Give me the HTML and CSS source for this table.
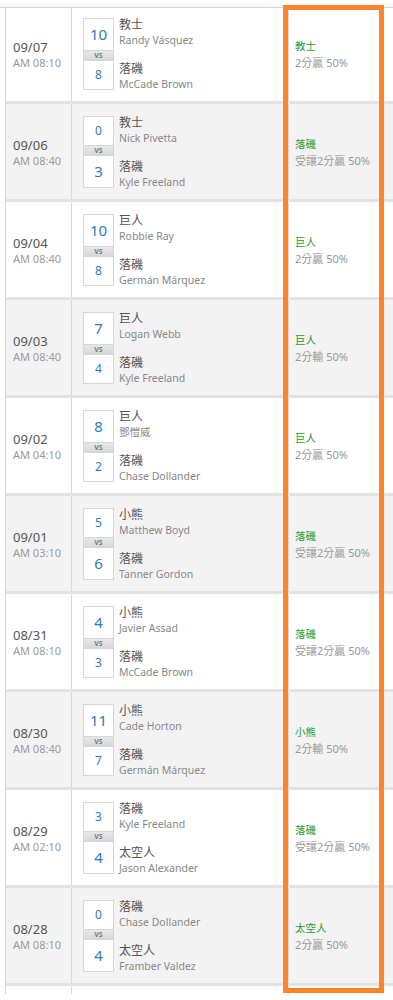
FILE: index.html
```html
<!DOCTYPE html>
<html lang="zh-Hant">
<head>
<meta charset="utf-8">
<title>賽果</title>
<link rel="stylesheet" href="styles.css">
</head>
<body>
<div class="page">
  <div class="topbar"></div>
  <div class="table">
    <div class="row">
      <div class="cell c-date"><div class="date">09/07</div><div class="time">AM 08:10</div></div>
      <div class="cell c-match">
        <div class="score"><div class="sc win">10</div><div class="vs">VS</div><div class="sc">8</div></div>
        <div class="teams">
          <div><div class="team">教士</div><div class="pitcher">Randy Vásquez</div></div>
          <div><div class="team">落磯</div><div class="pitcher">McCade Brown</div></div>
        </div>
      </div>
      <div class="cell c-res"><div class="pick">教士</div><div class="res">2分贏 50%</div></div>
      <div class="cell c-end"></div>
    </div>
    <div class="row alt">
      <div class="cell c-date"><div class="date">09/06</div><div class="time">AM 08:40</div></div>
      <div class="cell c-match">
        <div class="score"><div class="sc">0</div><div class="vs">VS</div><div class="sc win">3</div></div>
        <div class="teams">
          <div><div class="team">教士</div><div class="pitcher">Nick Pivetta</div></div>
          <div><div class="team">落磯</div><div class="pitcher">Kyle Freeland</div></div>
        </div>
      </div>
      <div class="cell c-res"><div class="pick">落磯</div><div class="res">受讓2分贏 50%</div></div>
      <div class="cell c-end"></div>
    </div>
    <div class="row">
      <div class="cell c-date"><div class="date">09/04</div><div class="time">AM 08:40</div></div>
      <div class="cell c-match">
        <div class="score"><div class="sc win">10</div><div class="vs">VS</div><div class="sc">8</div></div>
        <div class="teams">
          <div><div class="team">巨人</div><div class="pitcher">Robbie Ray</div></div>
          <div><div class="team">落磯</div><div class="pitcher">Germán Márquez</div></div>
        </div>
      </div>
      <div class="cell c-res"><div class="pick">巨人</div><div class="res">2分贏 50%</div></div>
      <div class="cell c-end"></div>
    </div>
    <div class="row alt">
      <div class="cell c-date"><div class="date">09/03</div><div class="time">AM 08:40</div></div>
      <div class="cell c-match">
        <div class="score"><div class="sc win">7</div><div class="vs">VS</div><div class="sc">4</div></div>
        <div class="teams">
          <div><div class="team">巨人</div><div class="pitcher">Logan Webb</div></div>
          <div><div class="team">落磯</div><div class="pitcher">Kyle Freeland</div></div>
        </div>
      </div>
      <div class="cell c-res"><div class="pick">巨人</div><div class="res">2分輸 50%</div></div>
      <div class="cell c-end"></div>
    </div>
    <div class="row">
      <div class="cell c-date"><div class="date">09/02</div><div class="time">AM 04:10</div></div>
      <div class="cell c-match">
        <div class="score"><div class="sc win">8</div><div class="vs">VS</div><div class="sc">2</div></div>
        <div class="teams">
          <div><div class="team">巨人</div><div class="pitcher">鄧愷威</div></div>
          <div><div class="team">落磯</div><div class="pitcher">Chase Dollander</div></div>
        </div>
      </div>
      <div class="cell c-res"><div class="pick">巨人</div><div class="res">2分贏 50%</div></div>
      <div class="cell c-end"></div>
    </div>
    <div class="row alt">
      <div class="cell c-date"><div class="date">09/01</div><div class="time">AM 03:10</div></div>
      <div class="cell c-match">
        <div class="score"><div class="sc">5</div><div class="vs">VS</div><div class="sc win">6</div></div>
        <div class="teams">
          <div><div class="team">小熊</div><div class="pitcher">Matthew Boyd</div></div>
          <div><div class="team">落磯</div><div class="pitcher">Tanner Gordon</div></div>
        </div>
      </div>
      <div class="cell c-res"><div class="pick">落磯</div><div class="res">受讓2分贏 50%</div></div>
      <div class="cell c-end"></div>
    </div>
    <div class="row">
      <div class="cell c-date"><div class="date">08/31</div><div class="time">AM 08:10</div></div>
      <div class="cell c-match">
        <div class="score"><div class="sc win">4</div><div class="vs">VS</div><div class="sc">3</div></div>
        <div class="teams">
          <div><div class="team">小熊</div><div class="pitcher">Javier Assad</div></div>
          <div><div class="team">落磯</div><div class="pitcher">McCade Brown</div></div>
        </div>
      </div>
      <div class="cell c-res"><div class="pick">落磯</div><div class="res">受讓2分贏 50%</div></div>
      <div class="cell c-end"></div>
    </div>
    <div class="row alt">
      <div class="cell c-date"><div class="date">08/30</div><div class="time">AM 08:40</div></div>
      <div class="cell c-match">
        <div class="score"><div class="sc win">11</div><div class="vs">VS</div><div class="sc">7</div></div>
        <div class="teams">
          <div><div class="team">小熊</div><div class="pitcher">Cade Horton</div></div>
          <div><div class="team">落磯</div><div class="pitcher">Germán Márquez</div></div>
        </div>
      </div>
      <div class="cell c-res"><div class="pick">小熊</div><div class="res">2分輸 50%</div></div>
      <div class="cell c-end"></div>
    </div>
    <div class="row">
      <div class="cell c-date"><div class="date">08/29</div><div class="time">AM 02:10</div></div>
      <div class="cell c-match">
        <div class="score"><div class="sc">3</div><div class="vs">VS</div><div class="sc win">4</div></div>
        <div class="teams">
          <div><div class="team">落磯</div><div class="pitcher">Kyle Freeland</div></div>
          <div><div class="team">太空人</div><div class="pitcher">Jason Alexander</div></div>
        </div>
      </div>
      <div class="cell c-res"><div class="pick">落磯</div><div class="res">受讓2分贏 50%</div></div>
      <div class="cell c-end"></div>
    </div>
    <div class="row alt">
      <div class="cell c-date"><div class="date">08/28</div><div class="time">AM 08:10</div></div>
      <div class="cell c-match">
        <div class="score"><div class="sc">0</div><div class="vs">VS</div><div class="sc win">4</div></div>
        <div class="teams">
          <div><div class="team">落磯</div><div class="pitcher">Chase Dollander</div></div>
          <div><div class="team">太空人</div><div class="pitcher">Framber Valdez</div></div>
        </div>
      </div>
      <div class="cell c-res"><div class="pick">太空人</div><div class="res">2分贏 50%</div></div>
      <div class="cell c-end"></div>
    </div>
    <div class="row last">
      <div class="cell c-date"></div>
      <div class="cell c-match"></div>
      <div class="cell c-res"></div>
      <div class="cell c-end"></div>
    </div>
  </div>
  <div class="highlight"></div>
</div>
</body>
</html>
```

FILE: styles.css
```css
* { box-sizing: border-box; }

body {
  margin: 0;
  background: #fff;
  font-family: "Noto Sans", "Noto Sans CJK TC", sans-serif;
  overflow: hidden;
}

.page {
  position: relative;
  padding-top: 6px;
}

.topbar {
  position: absolute;
  top: 0;
  left: 0;
  right: 0;
  height: 8px;
  background: linear-gradient(#ffffff, #f6f6f6);
  border-bottom: 1px solid #dadada;
  z-index: 1;
}

.table {
  margin-left: 5px;
  border-left: 1px solid #d9d9d9;
}

.row {
  display: grid;
  grid-template-columns: 66px 217px 93px 1fr;
  height: 98px;
  border-bottom: 3px solid #e3e3e3;
  background: #fff;
}

.row.alt { background: #f3f3f3; }

.row.last {
  height: 8px;
  border-bottom: none;
}

.cell {
  border-right: 1px solid #d9d9d9;
  display: flex;
}

.c-end { border-right: none; }

.c-date {
  flex-direction: column;
  justify-content: center;
  padding-left: 7px;
  padding-top: 2px;
}

.date {
  font-size: 13px;
  line-height: 16px;
  color: #555;
}

.time {
  font-size: 11px;
  line-height: 15px;
  color: #9a9a9a;
}

.c-match {
  align-items: center;
  padding-left: 11px;
}

.score {
  width: 31px;
  display: flex;
  flex-direction: column;
}

.sc {
  border: 1px solid #d6d6d6;
  background: #fff;
  text-align: center;
  color: #2f7cbd;
  font-size: 12px;
  line-height: 14px;
  padding: 7px 0;
}

.sc.win {
  font-size: 15px;
  line-height: 17px;
}

.vs {
  height: 9px;
  background: linear-gradient(#e8e8e8, #d8d8d8);
  border-left: 1px solid #d6d6d6;
  border-right: 1px solid #d6d6d6;
  font-size: 7px;
  line-height: 9px;
  font-weight: bold;
  text-align: center;
  color: #7a7a7a;
}

.teams {
  margin-left: 5px;
  height: 74px;
  display: flex;
  flex-direction: column;
  justify-content: space-between;
}

.team {
  font-size: 12px;
  line-height: 16px;
  color: #555;
}

.pitcher {
  font-size: 10.5px;
  line-height: 14px;
  color: #888;
}

.c-res {
  flex-direction: column;
  justify-content: center;
  padding-left: 6px;
  padding-top: 2px;
}

.pick {
  font-size: 10.5px;
  line-height: 15px;
  color: #2a9a2a;
}

.res {
  font-size: 11px;
  line-height: 17px;
  color: #999;
}

.highlight {
  position: absolute;
  left: 283px;
  top: 5px;
  width: 101px;
  height: 988px;
  border: 5px solid #fd8428;
  z-index: 2;
}
```
